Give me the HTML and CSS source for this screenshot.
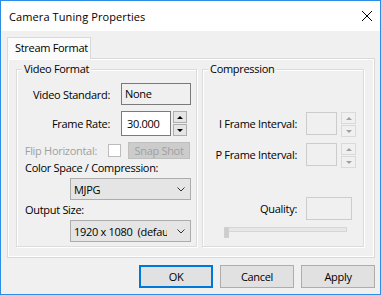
FILE: index.html
```html
<!DOCTYPE html>
<html lang="en">
<head>
  <meta charset="UTF-8">
  <title>Camera Tuning Properties</title>
  <link rel="stylesheet" href="styles.css">
</head>
<body>

  <div class="window">

    <!-- Title bar -->
    <div class="titlebar">
      <span class="title">Camera Tuning Properties</span>
      <svg class="close" width="12" height="12" viewBox="0 0 12 12">
        <path d="M1 1 L11 11 M11 1 L1 11" stroke="#000" stroke-width="1" fill="none"/>
      </svg>
    </div>

    <div class="client">
      <div class="tabs">
        <div class="tab">Stream Format</div>
      </div>

      <div class="panel">

        <!-- Video Format group -->
        <div class="group video">
          <div class="legend">Video Format</div>

          <div class="row row-std">
            <span class="lbl">Video Standard:</span>
            <div class="field readonly">None</div>
          </div>

          <div class="row row-rate">
            <span class="lbl">Frame Rate:</span>
            <div class="field edit">30.000</div>
            <div class="spin">
              <div class="spin-btn"><span class="arrow up"></span></div>
              <div class="spin-btn"><span class="arrow down"></span></div>
            </div>
          </div>

          <div class="row row-flip">
            <span class="lbl lbl-flip">Flip Horizontal:</span>
            <div class="check"></div>
            <div class="btn-disabled">Snap Shot</div>
          </div>

          <div class="caption cap-color">Color Space / Compression:</div>
          <div class="combo">
            <span class="combo-text">MJPG</span>
            <svg class="chev" width="8" height="5" viewBox="0 0 8 5"><path d="M0.5 0.5 L4 4 L7.5 0.5" stroke="#333" fill="none"/></svg>
          </div>

          <div class="caption">Output Size:</div>
          <div class="combo">
            <span class="combo-text clip">1920 x 1080  (default)</span>
            <svg class="chev" width="8" height="5" viewBox="0 0 8 5"><path d="M0.5 0.5 L4 4 L7.5 0.5" stroke="#333" fill="none"/></svg>
          </div>
        </div>

        <!-- Compression group -->
        <div class="group compression">
          <div class="legend">Compression</div>

          <div class="row crow row-iframe">
            <span class="clbl">I Frame Interval:</span>
            <div class="field off"></div>
            <div class="spin spin-off">
              <div class="spin-btn"><span class="arrow up"></span></div>
              <div class="spin-btn"><span class="arrow down"></span></div>
            </div>
          </div>

          <div class="row crow row-pframe">
            <span class="clbl">P Frame Interval:</span>
            <div class="field off"></div>
            <div class="spin spin-off">
              <div class="spin-btn"><span class="arrow up"></span></div>
              <div class="spin-btn"><span class="arrow down"></span></div>
            </div>
          </div>

          <div class="row crow row-quality">
            <span class="clbl">Quality:</span>
            <div class="field off wide"></div>
          </div>

          <div class="slider">
            <div class="track"></div>
            <div class="thumb"></div>
          </div>
        </div>

      </div>

      <div class="buttons">
        <button class="default">OK</button>
        <button>Cancel</button>
        <button>Apply</button>
      </div>
    </div>

  </div>

</body>
</html>
```

FILE: styles.css
```css
body {
  margin: 0;
  font-family: "Open Sans", "Noto Sans", sans-serif;
  font-size: 11px;
  color: #000;
}

.window {
  width: 381px;
  height: 295px;
  box-sizing: border-box;
  border: 1px solid #2b8de4;
  background: #f0f0f0;
  display: flex;
  flex-direction: column;
}

.titlebar {
  height: 30px;
  flex: none;
  background: #fff;
  display: flex;
  align-items: center;
  justify-content: space-between;
  padding: 0 7px 0 8px;
}

.title {
  font-size: 11px;
  letter-spacing: 0.1px;
}

.close {
  display: block;
}

.client {
  flex: 1;
  padding: 6px 5px 0 6px;
  letter-spacing: -0.3px;
}

.tabs {
  display: flex;
  height: 21px;
}

.tab {
  position: relative;
  z-index: 1;
  box-sizing: border-box;
  width: 84px;
  height: 22px;
  border: 1px solid #d9d9d9;
  border-bottom: none;
  background: #fbfbfb;
  padding-left: 7px;
  line-height: 20px;
  white-space: nowrap;
}

.panel {
  box-sizing: border-box;
  width: 368px;
  height: 200px;
  border: 1px solid #d9d9d9;
  box-shadow: inset 0 0 0 1px #fff;
  padding: 10px 0 0 8px;
  display: flex;
  align-items: flex-start;
  gap: 5px;
}

.group {
  box-sizing: border-box;
  height: 178px;
  border: 1px solid #dcdcdc;
  box-shadow: inset 1px 1px 0 #fff, 1px 1px 0 #fff;
}

.video {
  width: 181px;
}

.compression {
  width: 162px;
}

.legend {
  width: max-content;
  margin: -8px 0 0 5px;
  padding: 0 2px;
  line-height: 14px;
  background: #f0f0f0;
}

.row {
  display: flex;
  align-items: center;
}

.lbl {
  width: 93px;
  margin-right: 11px;
  text-align: right;
  white-space: nowrap;
}

.row-std {
  margin-top: 7px;
  height: 22px;
}

.row-rate {
  margin-top: 6px;
  height: 25px;
}

.row-flip {
  margin-top: 6px;
  height: 17px;
}

.lbl-flip {
  width: 80px;
  color: #a0a0a0;
}

.field {
  box-sizing: border-box;
  border: 1px solid #7a7a7a;
  padding-left: 3px;
  line-height: 20px;
}

.readonly {
  width: 70px;
  height: 22px;
  background: #f0f0f0;
}

.edit {
  width: 50px;
  height: 25px;
  line-height: 23px;
  padding-left: 5px;
  background: #fff;
}

.spin {
  margin-left: 2px;
  width: 14px;
  display: flex;
  flex-direction: column;
  gap: 1px;
}

.spin-btn {
  box-sizing: border-box;
  height: 12px;
  border: 1px solid #adadad;
  background: #e5e5e5;
  display: flex;
  align-items: center;
  justify-content: center;
}

.arrow {
  width: 0;
  height: 0;
  border-left: 3px solid transparent;
  border-right: 3px solid transparent;
}

.arrow.up {
  border-bottom: 3px solid #000;
}

.arrow.down {
  border-top: 3px solid #000;
}

.check {
  box-sizing: border-box;
  width: 13px;
  height: 13px;
  margin-right: 7px;
  border: 1px solid #bcbcbc;
  background: #fff;
}

.btn-disabled {
  box-sizing: border-box;
  width: 62px;
  height: 17px;
  border: 1px solid #bfbfbf;
  background: #cccccc;
  color: #a0a0a0;
  text-align: center;
  line-height: 15px;
  white-space: nowrap;
}

.caption {
  margin-top: 3px;
  padding-left: 8px;
  line-height: 14px;
}

.cap-color {
  margin-top: 2px;
}

.combo {
  box-sizing: border-box;
  width: 121px;
  height: 22px;
  margin: 3px 0 0 53px;
  border: 1px solid #acacac;
  background: #e5e5e5;
  display: flex;
  align-items: center;
  padding: 0 5px 0 3px;
}

.combo-text {
  flex: 1;
  overflow: hidden;
  white-space: pre;
  margin-right: 6px;
}

.combo-text.clip {
  margin-right: 10px;
}

.chev {
  display: block;
}

.crow {
  align-items: flex-start;
}

.clbl {
  width: 94px;
  margin-right: 9px;
  text-align: right;
  line-height: 23px;
  white-space: nowrap;
}

.row-iframe {
  margin-top: 36px;
}

.row-pframe {
  margin-top: 6px;
}

.row-quality {
  margin-top: 29px;
}

.off {
  width: 31px;
  height: 23px;
  border-color: #cccccc;
  background: #f0f0f0;
}

.off.wide {
  width: 46px;
}

.spin-off {
  margin-left: 4px;
  width: 15px;
}

.spin-off .spin-btn {
  border-color: #dadada;
  background: #f0f0f0;
}

.spin-off .arrow.up {
  border-bottom-color: #a0a0a0;
}

.spin-off .arrow.down {
  border-top-color: #a0a0a0;
}

.slider {
  position: relative;
  width: 123px;
  height: 11px;
  margin: 7px 0 0 21px;
}

.track {
  box-sizing: border-box;
  margin-top: 3px;
  height: 5px;
  border: 1px solid #d6d6d6;
  background: #e7e7e7;
}

.thumb {
  position: absolute;
  left: 0;
  top: 0;
  box-sizing: border-box;
  width: 5px;
  height: 11px;
  border: 1px solid #d0d0d0;
  background: #cdcdcd;
}

.buttons {
  margin-top: 7px;
  display: flex;
  justify-content: flex-end;
  gap: 7px;
}

button {
  box-sizing: border-box;
  width: 74px;
  height: 23px;
  padding: 0;
  border: 1px solid #adadad;
  background: #e1e1e1;
  font-family: inherit;
  font-size: 11px;
  letter-spacing: -0.3px;
  color: #000;
}

button.default {
  border: 2px solid #0078d7;
}
```
